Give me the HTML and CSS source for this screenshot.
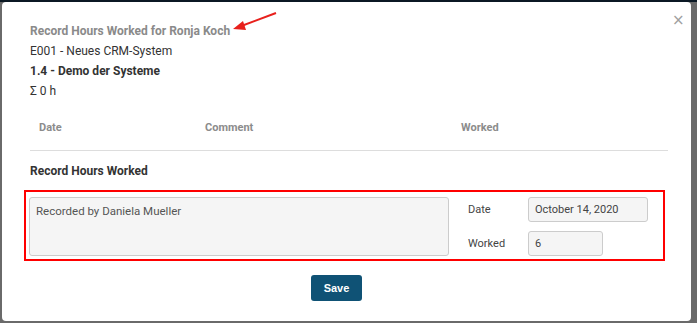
FILE: index.html
```html
<!DOCTYPE html>
<html>
<head>
<meta charset="utf-8">
<link rel="stylesheet" href="styles.css">
</head>
<body>
<div class="modal">
  <button class="close" aria-label="Close">&#215;</button>
  <svg class="arrow" width="50" height="24" viewBox="0 0 50 24">
    <line x1="44" y1="2" x2="8" y2="15.5" stroke="#e8201c" stroke-width="2"/>
    <polygon points="1,18 11,10 14,19" fill="#e8201c"/>
  </svg>
  <div class="title">Record Hours Worked for Ronja Koch</div>
  <div class="line">E001 - Neues CRM-System</div>
  <div class="line bold">1.4 - Demo der Systeme</div>
  <div class="line">Σ 0 h</div>
  <div class="thead">
    <span class="c-date">Date</span>
    <span class="c-comment">Comment</span>
    <span class="c-worked">Worked</span>
  </div>
  <div class="section">Record Hours Worked</div>
  <div class="highlight">
    <div class="textarea">Recorded by Daniela Mueller</div>
    <div class="fields">
      <label class="lbl">Date</label>
      <div class="input wide">October 14, 2020</div>
      <label class="lbl">Worked</label>
      <div class="input narrow">6</div>
    </div>
  </div>
  <div class="footer">
    <button class="save">Save</button>
  </div>
</div>
</body>
</html>
```

FILE: styles.css
```css
html, body {
  margin: 0;
  padding: 0;
}
body {
  width: 697px;
  height: 323px;
  box-sizing: border-box;
  padding: 2px 6px 2px 2px;
  background: linear-gradient(#0b1824 0, #0b1824 2px, #6a6a6a 2px);
  font-family: Roboto, "Liberation Sans", sans-serif;
  overflow: hidden;
}
.modal {
  position: relative;
  background: #fff;
  border-radius: 4px;
  height: 319px;
  box-sizing: border-box;
  padding: 19px 23px 0 28px;
  color: #333;
  font-size: 12px;
}
.close {
  position: absolute;
  top: 11px;
  right: 7px;
  border: 0;
  background: none;
  color: #a0a0a0;
  font-family: "DejaVu Sans", sans-serif;
  font-size: 15px;
  line-height: 15px;
  padding: 0;
  width: 12px;
}
.arrow {
  position: absolute;
  left: 230px;
  top: 9px;
}
.title {
  font-weight: bold;
  color: #8a8a8a;
  line-height: 20px;
}
.line {
  line-height: 20px;
}
.bold {
  font-weight: bold;
}
.thead {
  display: grid;
  grid-template-columns: 166px 256px 1fr;
  margin-top: 10px;
  padding: 9px 9px 15px;
  border-bottom: 1px solid #ddd;
  font-size: 11px;
  font-weight: bold;
  color: #8c8c8c;
  line-height: 15px;
}
.section {
  font-weight: bold;
  line-height: 20px;
  margin-top: 10px;
}
.highlight {
  margin-top: 9px;
  margin-left: -6px;
  width: 641px;
  box-sizing: border-box;
  border: 2px solid #f00;
  padding: 5px 3px 3px;
  display: grid;
  grid-template-columns: 420px 1fr;
  column-gap: 19px;
}
.textarea {
  height: 59px;
  box-sizing: border-box;
  background: #f5f5f5;
  border: 1px solid #ccc;
  border-radius: 3px;
  padding: 6px 6px;
  font-size: 11.5px;
  line-height: 14px;
  color: #555;
}
.fields {
  display: grid;
  grid-template-columns: 60px auto;
  row-gap: 8px;
  align-items: center;
  justify-items: start;
}
.lbl {
  font-size: 11px;
  color: #444;
}
.input {
  height: 25px;
  box-sizing: border-box;
  background: #f5f5f5;
  border: 1px solid #ccc;
  border-radius: 3px;
  padding: 0 6px;
  font-size: 11px;
  line-height: 23px;
  color: #444;
}
.wide { width: 120px; }
.narrow { width: 75px; }
.footer {
  padding-top: 14px;
  padding-left: 281px;
}
.save {
  width: 51px;
  height: 26px;
  border: 0;
  border-radius: 3px;
  background: #0f5275;
  color: #fff;
  font-family: "Liberation Sans", Arial, sans-serif;
  font-weight: bold;
  font-size: 11px;
  padding: 0;
}
```
